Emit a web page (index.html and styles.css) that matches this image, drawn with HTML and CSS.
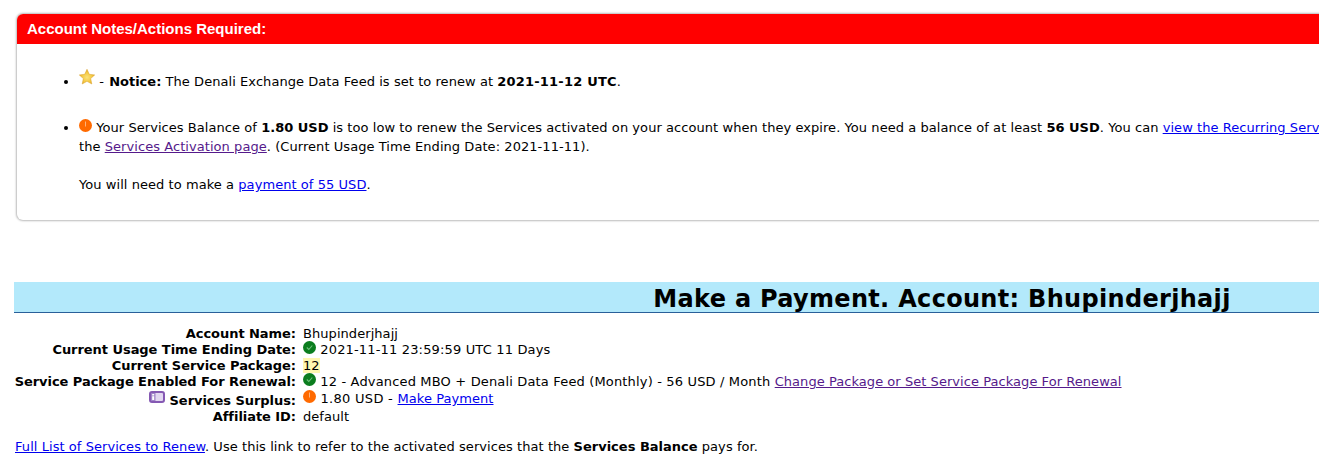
FILE: index.html
```html
<!DOCTYPE html>
<html lang="en">
<head>
<meta charset="utf-8">
<title>Make a Payment</title>
<link rel="stylesheet" href="styles.css">
</head>
<body>
<div class="page">
  <section class="notes">
    <h2 class="notes-head">Account Notes/Actions Required:</h2>
    <ul class="notes-list">
      <li class="note-star">
        <svg class="icon star" viewBox="0 0 16 16" aria-hidden="true"><defs><radialGradient id="sg" cx=".5" cy=".55" r=".55"><stop offset="0" stop-color="#fbe27a"/><stop offset=".6" stop-color="#f3c843"/><stop offset="1" stop-color="#e2a526"/></radialGradient></defs><path d="M8 .3l2.300 5 5.400.6-4 3.700 1.100 5.400L8 12.300 3.200 15l1.100-5.400-4-3.700 5.400-.6z" fill="url(#sg)" stroke="#dba32c" stroke-width=".5"/></svg>
        - <b class="notice">Notice:</b> The Denali Exchange Data Feed is set to renew at <b class="date">2021-11-12 UTC</b>.
      </li>
      <li class="note-warn">
        <svg class="icon" viewBox="0 0 13 13" aria-hidden="true"><circle cx="6.500" cy="6.500" r="6.500" fill="#ff6a00"/><rect x="6" y="2.500" width="1" height="5" fill="#ffb27a"/></svg>
        Your Services Balance of <b>1.80 USD</b> is too low to renew the Services activated on your account when they expire. You need a balance of at least <b>56 USD</b>. You can <a href="#a">view the Recurring Services page</a> or renew them using<br>
        the <a href="#v" class="seen">Services Activation page</a>. (Current Usage Time Ending Date: 2021-11-11).<br><br>
        You will need to make a <a href="#p">payment of 55 USD</a>.
      </li>
    </ul>
  </section>

  <h1 class="title">Make a Payment. Account: Bhupinderjhajj</h1>

  <dl class="info">
    <dt>Account Name:</dt>
    <dd>Bhupinderjhajj</dd>
    <dt>Current Usage Time Ending Date:</dt>
    <dd class="stat"><svg class="icon" viewBox="0 0 13 13" aria-hidden="true"><circle cx="6.500" cy="6.500" r="6.500" fill="#0b7d1e"/><path d="M3.800 6.500l2 2 3.500-4" fill="none" stroke="#6fc07c" stroke-width="1.100"/></svg> 2021-11-11 23:59:59 UTC 11 Days</dd>
    <dt>Current Service Package:</dt>
    <dd><span class="hl">12</span></dd>
    <dt>Service Package Enabled For Renewal:</dt>
    <dd class="stat"><svg class="icon" viewBox="0 0 13 13" aria-hidden="true"><circle cx="6.500" cy="6.500" r="6.500" fill="#0b7d1e"/><path d="M3.800 6.500l2 2 3.500-4" fill="none" stroke="#6fc07c" stroke-width="1.100"/></svg> 12 - Advanced MBO + Denali Data Feed (Monthly) - 56 USD / Month <a href="#c" class="seen">Change Package or Set Service Package For Renewal</a></dd>
    <dt class="surplus-label"><svg class="info-icon" viewBox="0 0 16 12" aria-hidden="true"><rect x="1" y="1" width="14" height="10" rx="2" fill="#e2d7f0" stroke="#8559b3" stroke-width="2"/><rect x="2" y="2" width="4.500" height="8" fill="#a184c9"/><rect x="3.200" y="3" width="2" height="1.500" fill="#fff"/><rect x="3.200" y="5.200" width="2" height="3.800" fill="#fff"/></svg> Services Surplus:</dt>
    <dd class="surplus-value"><svg class="icon" viewBox="0 0 13 13" aria-hidden="true"><circle cx="6.500" cy="6.500" r="6.500" fill="#ff6a00"/><rect x="6" y="2.500" width="1" height="5" fill="#ffb27a"/></svg> 1.80 USD - <a href="#m">Make Payment</a></dd>
    <dt>Affiliate ID:</dt>
    <dd>default</dd>
  </dl>

  <p class="foot"><a href="#f">Full List of Services to Renew</a>. Use this link to refer to the activated services that the <b>Services Balance</b> pays for.</p>
</div>
</body>
</html>
```
FILE: styles.css
```css
html { overflow-x: hidden; }
html, body { margin: 0; padding: 0; background: #fff; }
body { font: 13px/16px "DejaVu Sans", Verdana, sans-serif; color: #000; letter-spacing: .06px; }
b { letter-spacing: 0; }
.notice { margin-left: 1px; }
.date { letter-spacing: .2px; }
.page { width: 1856px; padding: 14px 14px 0; }
a { color: #00e; }
a.seen { color: #551a8b; }
.notes {
  margin: 0 3px;
  border-radius: 6px;
  box-shadow: 0 0 2px 1px #bbb;
  overflow: hidden;
  height: 206px;
  background: #fff;
}
.notes-head {
  margin: 0;
  padding: 0 10px;
  height: 30px;
  background: #f00;
  color: #fff;
  letter-spacing: 0;
  font: bold 15px/30px "Liberation Sans", Arial, sans-serif;
}
.notes-list { margin: 0; padding: 28px 0 0 62px; line-height: 19px; list-style: disc; }
.notes-list li { margin-bottom: 27px; }
.icon { width: 13px; height: 13px; vertical-align: 0; margin-top: -3px; }
.star { width: 16px; height: 16px; vertical-align: 1px; margin-top: -6px; }
.title {
  margin: 62px 0 0;
  height: 30px;
  background: #b3e9fb;
  border-bottom: 1px solid #2a6099;
  font: bold 24px/34px "DejaVu Sans", Verdana, sans-serif;
  letter-spacing: .31px;
  text-align: center;
}
.info {
  margin: 13px 0 0;
  display: grid;
  grid-template-columns: 282px 1fr;
  column-gap: 7px;
}
.info dt { font-weight: bold; text-align: right; white-space: nowrap; letter-spacing: -.05px; }
.info dd { margin: 0; }
.info .stat { letter-spacing: .16px; }
.stat a { letter-spacing: .05px; }
.surplus-label { padding-top: 3px; }
.info .surplus-value { padding-top: 1px; letter-spacing: .3px; }
.surplus-value a { letter-spacing: .055px; }
.info-icon { width: 16px; height: 12px; vertical-align: 2px; margin-top: -6px; }
.hl { background: #fff7b0; }
.foot { margin: 14px 0 0 1px; }
```
